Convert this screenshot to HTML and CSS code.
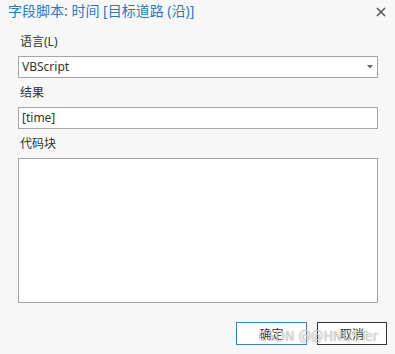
FILE: index.html
```html
<!DOCTYPE html>
<html lang="zh">
<head>
    <meta charset="UTF-8">
    <title>字段脚本</title>
    <link rel="stylesheet" href="styles.css">
</head>
<body>
    <div class="dialog">
        <div class="header">
            <span class="title">字段脚本: 时间 [目标道路 (沿)]</span>
            <button class="close">
                <svg width="10" height="10" viewBox="0 0 10 10"><path d="M1 1 L9 9 M9 1 L1 9" stroke="#555" stroke-width="1.5"/></svg>
            </button>
        </div>
        <div class="form">
            <div class="label">语言(L)</div>
            <div class="field select">
                <span>VBScript</span>
                <svg width="6" height="4" viewBox="0 0 6 4"><path d="M0 0 H6 L3 3.5 Z" fill="#666"/></svg>
            </div>
            <div class="label spaced">结果</div>
            <div class="field">[time]</div>
            <div class="label spaced">代码块</div>
            <div class="field code"></div>
        </div>
        <div class="buttons">
            <button class="btn primary">确定</button>
            <button class="btn">取消</button>
        </div>
        <div class="watermark">CSDN @@HNUSTer</div>
    </div>
</body>
</html>
```

FILE: styles.css
```css
body {
    margin: 0;
    background-color: #f7f7f7;
    font-family: "Noto Sans", "Noto Sans CJK SC", sans-serif;
    color: #333;
}
.dialog {
    position: relative;
    width: 395px;
    height: 354px;
}
.header {
    display: flex;
    justify-content: space-between;
    align-items: flex-start;
    height: 31px;
    padding: 2px 9px 0 8px;
    box-sizing: border-box;
}
.title {
    font-size: 14px;
    line-height: 18px;
    color: #2d7ab8;
}
.close {
    border: none;
    background: transparent;
    padding: 0;
    margin-top: 5px;
    width: 10px;
    height: 10px;
    display: flex;
}
.form {
    padding: 0 17px 0 18px;
}
.label {
    font-size: 12px;
    line-height: 22px;
    height: 22px;
    margin-bottom: 3px;
    padding-left: 2px;
}
.label.spaced {
    margin-top: 4px;
}
.field {
    height: 22px;
    box-sizing: border-box;
    border: 1px solid #a5a5a5;
    background-color: #fff;
    font-size: 12px;
    line-height: 20px;
    padding: 0 4px 0 3px;
}
.select {
    display: flex;
    justify-content: space-between;
    align-items: center;
}
.code {
    height: 145px;
}
.buttons {
    display: flex;
    justify-content: flex-end;
    gap: 10px;
    padding: 19px 8px 0 0;
}
.btn {
    width: 70px;
    height: 23px;
    padding: 0;
    font-family: inherit;
    font-size: 12px;
    color: #333;
    background-color: #fff;
    border: 1px solid #333;
}
.btn.primary {
    width: 71px;
    border-color: #3c82b8;
}
.watermark {
    position: absolute;
    right: 17px;
    bottom: 10px;
    font-family: "DejaVu Sans", sans-serif;
    font-stretch: condensed;
    font-size: 14px;
    color: rgba(255, 255, 255, 0.6);
    text-shadow: 0 0 1px rgba(110, 110, 110, 0.8);
}
```
